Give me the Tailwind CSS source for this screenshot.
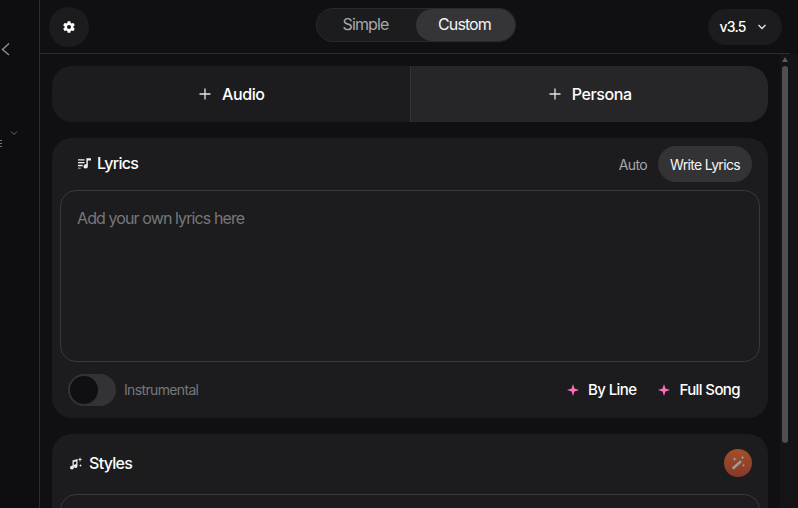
<!DOCTYPE html>
<html lang="en">
<head>
    <meta charset="UTF-8">
    <meta name="viewport" content="width=device-width, initial-scale=1.0">
    <title>Create</title>
    <script src="https://cdn.jsdelivr.net/npm/@tailwindcss/browser@4"></script>
</head>
<body class="bg-[#101012] h-[508px] overflow-hidden font-['Inter',sans-serif] text-white">
<div class="flex h-[508px] overflow-hidden">
    <!-- collapsed sidebar -->
    <aside class="w-[40px] shrink-0 border-r border-[#2c2c2e] bg-[#0e0e10] relative">
        <svg class="absolute left-0 top-[41px]" width="11" height="16" viewBox="0 0 11 16" fill="none" stroke="#8a8a8c" stroke-width="1.5"><path d="M9 2.500 2.500 8.500 9 14"/></svg>
        <svg class="absolute left-[10px] top-[130px]" width="8" height="6" viewBox="0 0 8 6" fill="none" stroke="#6a6a6c" stroke-width="1"><path d="M1 1.500 4 4.500 7 1.500"/></svg>
        <div class="absolute left-0 top-[140px] w-[2px] h-[7px] border-y border-[#77777a] flex items-center"><div class="w-full h-px bg-[#77777a]"></div></div>
    </aside>

    <div class="flex-1 min-w-0 flex flex-col">
        <!-- top bar -->
        <header class="h-[54px] shrink-0 border-b border-[#2c2c2e] flex items-center pl-[9px] w-[750px]">
            <button class="w-10 h-10 rounded-full bg-[#1c1c1e] flex items-center justify-center">
                <svg width="14" height="14" viewBox="0 0 24 24" fill="#fff"><path fill-rule="evenodd" d="M19.4 13c.05-.33.1-.66.1-1s-.03-.67-.1-1l2.100-1.600c.2-.15.25-.42.13-.64l-2-3.460c-.12-.22-.39-.3-.61-.22l-2.490 1a7.300 7.300 0 0 0-1.690-.98l-.38-2.650A.49.49 0 0 0 14 2h-4a.49.49 0 0 0-.49.42l-.38 2.650c-.61.25-1.170.59-1.690.98l-2.490-1c-.23-.09-.49 0-.61.22l-2 3.460c-.13.22-.07.49.12.64L4.600 11c-.05.33-.1.66-.1 1s.04.67.1 1l-2.100 1.600c-.2.15-.25.42-.13.64l2 3.460c.12.22.39.3.61.22l2.490-1c.52.4 1.080.73 1.690.98l.38 2.650c.03.24.24.42.49.42h4c.25 0 .46-.18.49-.42l.38-2.650c.61-.25 1.170-.59 1.690-.98l2.490 1c.23.09.49 0 .61-.22l2-3.460c.12-.22.07-.49-.12-.64L19.400 13ZM12 15.500a3.500 3.500 0 1 1 0-7 3.500 3.500 0 0 1 0 7Z"/></svg>
            </button>
            <div class="ml-[227px] mb-1 flex h-[34px] rounded-full border border-[#2a2a2c] bg-[#1c1c1e] text-[16px] tracking-[-0.9px]">
                <span class="w-[99px] pb-[2px] pr-[2px] flex items-center justify-center text-[#a8a8aa]">Simple</span>
                <span class="w-[99px] pb-[2px] pr-[2px] flex items-center justify-center rounded-full bg-[#353537] text-[#f4f4f5]">Custom</span>
            </div>
            <button class="ml-[192px] w-[74px] h-[36px] pr-1 rounded-full bg-[#1c1c1e] flex items-center justify-center gap-[11px] text-[14px] font-medium tracking-[-0.8px]">
                v3.5
                <svg width="10" height="8" viewBox="0 0 10 8" fill="none" stroke="#e5e5e5" stroke-width="1.3"><path d="M1.500 2 5 5.500 8.500 2"/></svg>
            </button>
        </header>

        <div class="flex-1 min-h-0 flex">
            <main class="w-[740px] shrink-0 pl-3 pr-3 pt-3 flex flex-col gap-4 overflow-hidden">
                <div class="flex h-14 shrink-0 w-[716px] rounded-[20px] overflow-hidden text-[16px] font-medium tracking-[-0.4px]">
                    <div class="flex-1 pl-[2px] bg-[#1c1c1e] flex items-center justify-center gap-[11px] border-r border-[#333335]">
                        <svg width="12" height="12" viewBox="0 0 12 12" stroke="#e5e5e5" stroke-width="1.3"><path d="M6 0.500v11M0.500 6h11"/></svg>
                        Audio
                    </div>
                    <div class="flex-1 pl-[2px] bg-[#262628] flex items-center justify-center gap-[11px]">
                        <svg width="12" height="12" viewBox="0 0 12 12" stroke="#e5e5e5" stroke-width="1.3"><path d="M6 0.500v11M0.500 6h11"/></svg>
                        Persona
                    </div>
                </div>

                <!-- lyrics -->
                <section class="w-[716px] h-[280px] shrink-0 rounded-[20px] bg-[#1c1c1e] p-2">
                    <div class="h-9 flex items-center justify-between pl-[18px] pr-2">
                        <div class="pb-[2px] flex items-center gap-[6px] text-[16px] font-medium tracking-[-0.7px]">
                            <svg width="13" height="12" viewBox="0 0 14 12" fill="#eee"><path d="M0 2h7v1.400H0zM0 5h7v1.400H0zM0 8h5v1.400H0zM0 11h3v1H0zM9 1h5v2.400h-3.400V9.500A2.300 2.300 0 1 1 9 7.400z"/></svg>
                            Lyrics
                        </div>
                        <div class="flex items-center gap-[11px] text-[14px] tracking-[-0.65px]">
                            <span class="text-[#a8a8aa]">Auto</span>
                            <span class="h-9 w-[94px] rounded-full bg-[#333335] flex items-center justify-center text-[#f4f4f5]">Write Lyrics</span>
                        </div>
                    </div>
                    <div class="mt-2 h-[172px] rounded-[16px] border border-[#38383a] px-4 py-[17px] text-[16px] leading-[20px] tracking-[-0.9px] text-[#77777a]">Add your own lyrics here</div>
                    <div class="mt-3 flex items-center justify-between pl-2 pr-5 h-8">
                        <div class="flex items-center gap-2">
                            <div class="w-12 h-8 rounded-full bg-[#333335] p-[2px]"><div class="w-[28px] h-[28px] rounded-full bg-[#101012]"></div></div>
                            <span class="text-[14px] leading-[20px] tracking-[-0.65px] text-[#77777a]">Instrumental</span>
                        </div>
                        <div class="flex items-center gap-[22px] text-[15px] leading-[20px] font-medium tracking-[-0.6px]">
                            <span class="flex items-center gap-[9px]">
                                <svg width="12" height="12" viewBox="0 0 12 12" fill="#ff6fb5"><path d="M6 0 7.400 4.600 12 6 7.400 7.400 6 12 4.600 7.400 0 6 4.600 4.600Z"/></svg>
                                By Line
                            </span>
                            <span class="flex items-center gap-[9px]">
                                <svg width="12" height="12" viewBox="0 0 12 12" fill="#ff6fb5"><path d="M6 0 7.400 4.600 12 6 7.400 7.400 6 12 4.600 7.400 0 6 4.600 4.600Z"/></svg>
                                Full Song
                            </span>
                        </div>
                    </div>
                </section>

                <!-- styles -->
                <section class="w-[716px] h-[200px] shrink-0 rounded-[20px] bg-[#1c1c1e] p-2">
                    <div class="h-9 flex items-center justify-between pl-[9px] pr-[8px] mt-[3px]">
                        <div class="flex items-center gap-[6px] text-[16px] font-medium tracking-[-0.7px]">
                            <svg width="14" height="14" viewBox="0 0 14 14" fill="#eee"><path d="M3.500 4.500 8.500 3V10A1.900 1.900 0 1 1 7.200 8.300V5.200L4.800 6V11.500A1.900 1.900 0 1 1 3.500 9.800ZM11 1l.6 1.900 1.900.6-1.900.6L11 6l-.6-1.900-1.900-.6 1.900-.6zM11.500 8l.4 1.100 1.100.4-1.100.4-.4 1.100-.4-1.100-1.100-.4 1.100-.4z"/></svg>
                            Styles
                        </div>
                        <div class="w-7 h-7 rounded-full bg-gradient-to-b from-[#a34f27] to-[#86392a] flex items-center justify-center">
                            <svg width="18" height="18" viewBox="0 0 16 16" fill="#9a9a9a"><path d="M2.500 12 10 5.500l1.500 1.500L4 14z"/><path d="M5 2.500l.5 1.500 1.500.5-1.500.5L5 6.500 4.500 5 3 4.500 4.500 4zM12 1.500l.5 1.200 1.200.5-1.200.5-.5 1.200-.5-1.200-1.200-.5 1.200-.5zM13 8.500l.4 1.100 1.100.4-1.100.4-.4 1.100-.4-1.100-1.100-.4 1.100-.4z"/></svg>
                        </div>
                    </div>
                    <div class="mt-[13px] h-[120px] rounded-[16px] border border-[#38383a]"></div>
                </section>
            </main>

            <!-- scrollbar -->
            <div class="w-[18px] shrink-0 bg-[#141416] relative">
                <svg class="absolute left-[2px] top-[3px]" width="6" height="5" viewBox="0 0 6 5" fill="#5a5a5c"><path d="M3 0 6 5H0z"/></svg>
                <div class="absolute left-[2px] top-[12px] w-[6px] h-[377px] rounded-full bg-[#4f4f51]"></div>
            </div>
        </div>
    </div>
</div>
</body>
</html>
